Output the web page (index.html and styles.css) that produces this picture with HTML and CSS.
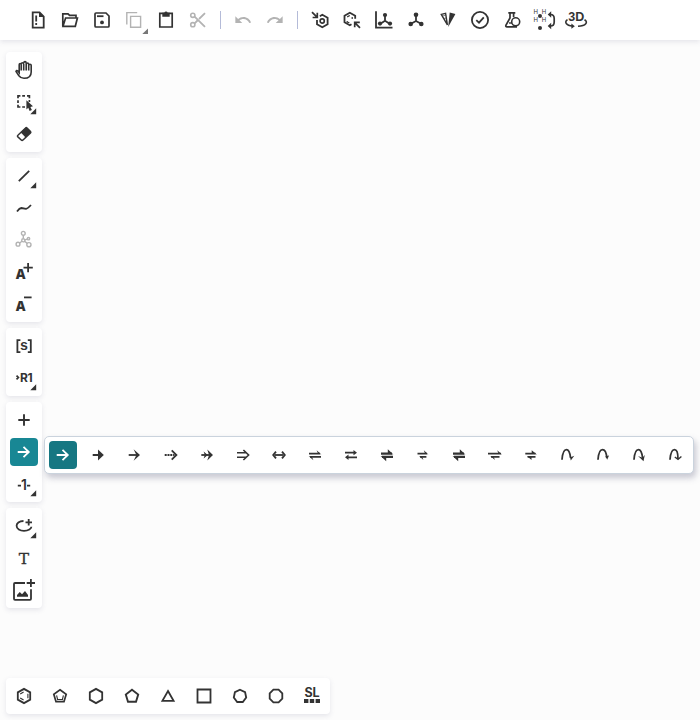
FILE: index.html
```
<!DOCTYPE html>
<html lang="en">
<head>
<meta charset="utf-8">
<title>Structure editor</title>
<link rel="stylesheet" href="styles.css">
</head>
<body>
<header class="topbar">
  <svg class="icon" viewBox="-16 -16 32 32"><path d="M-5.3-7.6H1.6L5.7-3.5V7.6H-5.3Z"/><path class="fill" d="M1-8L6-3H1Z"/><path d="M-1.8-4.6V1.6M-1.8 3V4.9" stroke-width="1.8"/></svg>
  <svg class="icon" viewBox="-16 -16 32 32"><path d="M-7.2 6V-6.2H-2L-.4-4.6H6V-2M-7 6.3L-4.4-2H7.4L5.3 6.3Z" stroke-width="1.7"/></svg>
  <svg class="icon" viewBox="-16 -16 32 32"><path d="M-6-7H4L7-4V6Q7 7 6 7H-6Q-7 7-7 6V-6Q-7-7-6-7Z" stroke-width="1.7"/><path d="M-5-3.8H1.5" stroke-width="1.8"/><circle class="fill" cx="0" cy="2.4" r="1.9"/></svg>
  <svg class="icon muted" viewBox="-16 -16 32 32"><path d="M-7.2 4.5V-7.4H3.2M-3.4-3.6H6.6V7.3H-3.4Z" stroke-width="1.4"/><path class="corner" d="M14 8.5V14H8.3Z"/></svg>
  <svg class="icon" viewBox="-16 -16 32 32"><path d="M-6.2-6.6H6.2V7H-6.2Z" stroke-width="1.7"/><path class="fill" d="M-3.7-7.3H-1.7A1.8 1.8 0 0 1 1.7-7.3H3.7V-3.2H-3.7Z"/></svg>
  <svg class="icon muted" viewBox="-16 -16 32 32"><circle cx="-5.2" cy="-4.7" r="2.1" stroke-width="1.6"/><circle cx="-5.2" cy="4.7" r="2.1" stroke-width="1.6"/><path d="M-3.4-3.4L7 6.8M-3.4 3.4L-.5.5M1-1L7-6.8"/></svg>
  <i class="divider"></i>
  <svg class="icon muted" viewBox="-16 -16 32 32"><path class="fill" transform="translate(-9.2 -9.2) scale(.77)" d="M12.5 8c-2.65 0-5.05.99-6.9 2.6L2 7v9h9l-3.62-3.62c1.39-1.16 3.16-1.88 5.12-1.88 3.54 0 6.55 2.31 7.6 5.5l2.37-.78C21.08 11.03 17.15 8 12.5 8z"/></svg>
  <svg class="icon muted" viewBox="-16 -16 32 32"><path class="fill" transform="translate(9.2 -9.2) scale(-.77 .77)" d="M12.5 8c-2.65 0-5.05.99-6.9 2.6L2 7v9h9l-3.62-3.62c1.39-1.16 3.16-1.88 5.12-1.88 3.54 0 6.55 2.31 7.6 5.5l2.37-.78C21.08 11.03 17.15 8 12.5 8z"/></svg>
  <i class="divider"></i>
  <svg class="icon" viewBox="-16 -16 32 32"><path d="M-8-7.8L-3-2.8M-2.7-7.2V-2.5H-7.4" stroke-width="1.7"/><path d="M-3 0V4.2L2.3 7.2L7.6 4.2V-2.2L2.3-5.2L-.2-3.8"/><circle cx="2.2" cy="1" r="2.1" stroke-width="1.7"/></svg>
  <svg class="icon" viewBox="-16 -16 32 32"><path d="M3.2-1.2V-4.2L-2.2-7.2L-7.5-4.2V2.2L-2.2 5.2L-.5 4.2"/><path d="M-4.8-3.1L-2.2-4.5M.2-3.1V-1M-4.8 1V2L-2.6 2.7" stroke-width="1.2"/><path d="M8 7.8L3 2.8M2.7 7.2V2.3H7.8" stroke-width="1.7"/></svg>
  <svg class="icon" viewBox="-16 -16 32 32"><path d="M-8-8.7V7.7H8.5"/><path d="M1-5V.8L-4 4M1 .8L6 4"/><g class="fill"><circle cx="1" cy="-5" r="2.1"/><circle cx="-4" cy="3.6" r="2.1"/><circle cx="6" cy="3.6" r="2.1"/></g></svg>
  <svg class="icon" viewBox="-16 -16 32 32"><path d="M0-5V1L-5.5 4M0 1L5.5 4"/><g class="fill"><circle cx="0" cy="-5.2" r="2.3"/><circle cx="-5.3" cy="4" r="2.3"/><circle cx="5.3" cy="4" r="2.3"/></g></svg>
  <svg class="icon" viewBox="-16 -16 32 32"><path d="M-6.7-5.6L-2.4-6.6L-.6 4.8Z" stroke-width="1.4"/><path d="M-5.5-4L-2.4-4.8M-4.2-1.5L-2-2" stroke-width=".6"/><path class="fill" d="M1.7-7.4L7.4-6L.2 7Z"/></svg>
  <svg class="icon" viewBox="-16 -16 32 32"><circle cx="0" cy="0" r="8.1" stroke-width="1.8"/><path d="M-3.7.1L-1 2.6L3.8-2.7"/></svg>
  <svg class="icon" viewBox="-16 -16 32 32"><path d="M-3.7-7.2H3.3M-2-7V-2L-6 5Q-6.7 6.9-5 6.9H5M1.6-7V-3" stroke-width="1.7"/><circle cx="3.7" cy="1.8" r="4" stroke-width="1.6"/><path d="M-3 3H0" stroke-width="1.4"/></svg>
  <svg class="icon" viewBox="-16 -16 32 32"><g class="atoms"><text x="-10.6" y="-6">H</text><text x="-2.3" y="-6">H</text><text x="-10.6" y="2.2">H</text><text x="-2.3" y="2.2">H</text></g><g class="fill"><circle cx="-4" cy="-4" r="2"/><circle cx="-4" cy="8" r="2"/><path d="M3.7-5.5L7.2-8.8V-2.2ZM3.7 6L7.2 2.7V9.3Z"/></g><path d="M6.5-5.5Q10.2-5.5 10.2-1.5V2Q10.2 6 6.5 6" stroke-width="1.7"/></svg>
  <svg class="icon" viewBox="-16 -16 32 32"><text class="three" x="-7.8" y="1">3D</text><path d="M-8.5-.3C-12 2-10 5.3-3.5 6M8.5-.3C12.5 2 10 5.8 2 6.3" stroke-width="1.6"/><path class="fill" d="M-4.6 3.4L-1.2 6.3L-4.6 8.8Z"/></svg>
</header>
<main class="canvas">
  <nav class="rail">
    <section class="panel">
      <svg class="icon" viewBox="-16 -16 32 32"><path d="M-2.8.5V-5.2Q-2.8-6.5-3.8-6.5T-4.8-5.2V2.7L-6.3.8Q-7.5 0-8 1.4L-5.1 5.8Q-3.3 8.3 0 8.3Q7.2 8.3 7.2 2V-4.4Q7.2-5.7 6-5.7T4.7-4.4V.5M-2.8-6Q-2.6-7.3-1.5-7.3T-.3-6V.5M-.3-7Q-.1-8.4 1-8.4T2.2-7V.5M2.2-5.8Q2.4-7 3.5-7T4.7-5.8V-3" stroke-width="1.6"/></svg>
      <svg class="icon" viewBox="-16 -16 32 32"><path d="M-6-3.8V-6.2H-3.6M-1.8-6.2H1M3-6.2H5.4V-3.8M-6-1.8V1M-6 2.8V5H-3.6M-1.8 5H1M5.4-2V0" stroke-width="1.7"/><path class="fill" d="M2.4-1.8L9 4.2L6.4 4.9L7.9 7.9L5.6 8.9L4.3 5.8L2.4 7.4Z"/><path class="corner" d="M12.2 6.3V12.2H6.3Z"/></svg>
      <svg class="icon" viewBox="-16 -16 32 32"><path class="fill" d="M2.2-7L7-2.2L1.6 3.4L-3.2-1.4Z"/><path d="M1.6-6Q2.3-6.7 3-6L6.5-2.5Q7.2-1.8 6.5-1.1L-1 6Q-1.9 6.8-2.8 6L-6.1 2.9Q-7 2-6.1 1.2Z" stroke-width="1.5"/></svg>
    </section>
    <section class="panel">
      <svg class="icon" viewBox="-16 -16 32 32"><path d="M-5.2 5.2L5.2-5.2" stroke-width="1.8"/><path class="corner" d="M12.2 6.3V12.2H6.3Z"/></svg>
      <svg class="icon" viewBox="-16 -16 32 32"><path d="M-7 3.5Q-4.5.2-2.6 0L2 .9Q3.5.7 7-3" stroke-width="1.8"/></svg>
      <svg class="icon muted" viewBox="-16 -16 32 32"><g stroke-width="1.4"><circle cx="-.7" cy="-6.7" r="1.9"/><circle cx="-.7" cy=".3" r="1.6"/><circle cx="-6" cy="4.2" r="1.9"/><circle cx="4.9" cy="4.7" r="2.1"/><circle cx="4.5" cy="-1.3" r="1.2"/><path d="M-.7-4.8V-1.4M-2 1.3L-4.4 3M.6 1.3L3.2 3.4M.9-.1L3.3-.9"/></g></svg>
      <svg class="icon" viewBox="-16 -16 32 32"><text class="letter" x="-8.3" y="7.3">A</text><path d="M-.5-4.3H8.8M4.1-9V.3"/></svg>
      <svg class="icon" viewBox="-16 -16 32 32"><text class="letter" x="-8.3" y="7.3">A</text><path d="M0-6.6H7.6"/></svg>
    </section>
    <section class="panel">
      <svg class="icon" viewBox="-16 -16 32 32"><path d="M-3.6-5.8H-6.6V6.1H-3.6M3.8-5.8H6.8V6.1H3.8"/><text class="sgroup" x="0" y="4">s</text></svg>
      <svg class="icon" viewBox="-16 -16 32 32"><path d="M-7.5-2.4L-5.6-.5L-7.5 1.4" stroke-width="1.7"/><text class="rgroup" x="-4" y="4">R1</text><path class="corner" d="M12.2 6.3V12.2H6.3Z"/></svg>
    </section>
    <section class="panel">
      <svg class="icon" viewBox="-16 -16 32 32"><path d="M-5.7 0H5.7M0-5.7V5.7" stroke-width="1.9"/></svg>
      <svg class="icon active" viewBox="-16 -16 32 32"><path d="M-6.3 0H4.6M-.5-5.2L4.8 0L-.5 5.2" stroke-width="1.8"/></svg>
      <svg class="icon" viewBox="-16 -16 32 32"><path d="M-6.2 1.6H-3M3 1.6H6.2"/><text class="mapping" x="0" y="5.6">1</text><path class="corner" d="M12.2 6.3V12.2H6.3Z"/></svg>
    </section>
    <section class="panel">
      <svg class="icon" viewBox="-16 -16 32 32"><path d="M-.5-5C-5-5-7.4-2.6-7.4-.3C-7.4 3-4 4.8 0 4.8C4.5 4.8 7.4 2.5 7.4.8"/><path d="M1.5-3.7H8M4.7-7V-.5" stroke-width="1.8"/><path class="corner" d="M12.2 6.3V12.2H6.3Z"/></svg>
      <svg class="icon" viewBox="-16 -16 32 32"><text class="serif" x="0" y="6">T</text></svg>
      <svg class="icon" viewBox="-16 -16 32 32"><path d="M1-7H-9Q-10-7-10-6V8.8Q-10 9.8-9 9.8H6Q7 9.8 7 8.8V-.8M2.7-7H11M6.9-11V-2.9"/><path class="fill" d="M-7 6.7V5L-4.2 2L-2 4.2L1 1L4 5V6.7Z"/></svg>
    </section>
  </nav>
  <div class="flyout">
    <svg class="icon active" viewBox="-16 -16 32 32"><path d="M-6.3 0H4.6M-.5-5.2L4.8 0L-.5 5.2" stroke-width="1.8"/></svg>
    <svg class="icon" viewBox="-16 -16 32 32"><path d="M-6.3 0H0" stroke-width="2"/><path class="fill" d="M-1-5.6L4.8 0L-1 5.6Z"/></svg>
    <svg class="icon" viewBox="-16 -16 32 32"><path d="M-6.3 0H3"/><path class="fill" d="M-1.4-5.7L5 0L-1.4 5.7L1.4 0Z"/></svg>
    <svg class="icon" viewBox="-16 -16 32 32"><path d="M-6.3 0H3.5" stroke-dasharray="2 .8"/><path d="M.7-4.6L5.4 0L.7 4.6" stroke-width="1.8"/></svg>
    <svg class="icon" viewBox="-16 -16 32 32"><path d="M-5.7 0H4"/><path class="fill" d="M.3-5.6L6 0L.3 5.6L2 0ZM-3.4-3.4L.8 0L-3.4 3.4L-2.2 0Z"/></svg>
    <svg class="icon" viewBox="-16 -16 32 32"><path d="M-6-2.3H3.3M-6 2.3H3.3M.4-5L5.6 0L.4 5" stroke-width="1.6"/></svg>
    <svg class="icon" viewBox="-16 -16 32 32"><path d="M-4.5 0H4.5"/><path d="M-3-3.4L-5.8 0L-3 3.4M3-3.4L5.8 0L3 3.4" stroke-width="1.8"/></svg>
    <svg class="icon" viewBox="-16 -16 32 32"><path d="M-6-1.4H5M-5 1.9H6"/><path class="fill" d="M6.4-.5L1.6-4.8L3-1.4ZM-6.4 1L-1.6 5.3L-3 1.9Z"/></svg>
    <svg class="icon" viewBox="-16 -16 32 32"><path d="M-6-2.3H4M-4 2.3H6"/><path class="fill" d="M6-2.3L2.5-5V.3ZM-6 2.3L-2.5-.4V5Z"/></svg>
    <svg class="icon" viewBox="-16 -16 32 32"><path d="M-6-1.4H5M-5 1.9H6" stroke-width="2.1"/><path class="fill" d="M6.4-.4L.8-5.8V-1.4ZM-6.4.9L-.8 6.2V1.9Z"/></svg>
    <svg class="icon" viewBox="-16 -16 32 32"><path d="M-5.5-1.4H4M-3 1.8H3.4"/><path class="fill" d="M5.4-.5L.8-4.8L2-1.4ZM-3.9.9L.4 5.1L-.8 1.8Z"/></svg>
    <svg class="icon" viewBox="-16 -16 32 32"><path d="M-6-1.4H5M-5 1.9H6" stroke-width="2.1"/><path class="fill" d="M6.4-.4L.8-5.8V-1.4ZM-6.4.9L-.8 6.2V1.9Z"/></svg>
    <svg class="icon" viewBox="-16 -16 32 32"><path d="M-7-1.4H6M-4 1.8H4.5"/><path class="fill" d="M7-.5L2.2-4.8L3.5-1.4ZM-4.8.9L0 5.1L-1.4 1.8Z"/></svg>
    <svg class="icon" viewBox="-16 -16 32 32"><path d="M-5.7-1.4H4.5M-3.4 1.8H4.5"/><path class="fill" d="M5.9-.5L.7-4.8V-1.4ZM-4 .9L.5 5V1.8Z"/></svg>
    <svg class="icon" viewBox="-16 -16 32 32"><path d="M-5 4.7C-4.5-2-3.2-5.3-.5-5.3C2.3-5.3 3-2 3.6 3" stroke-width="1.8"/><path class="fill" d="M2.6.5L4.2 2L7.3.7L3.8 5.4Z"/></svg>
    <svg class="icon" viewBox="-16 -16 32 32"><path d="M-5 4.7C-4.5-2-3.2-5.3-.5-5.3C2.3-5.3 3.4-2 3.8 3" stroke-width="1.8"/><path class="fill" d="M2.4 1.2L6 .6L4.2 4.8Z"/></svg>
    <svg class="icon" viewBox="-16 -16 32 32"><path d="M-5 4.7C-4.5-2-3.2-5.3-.5-5.3C2.3-5.3 3-2 3.6 3" stroke-width="1.8"/><path class="fill" d="M-1 1L3.4 2.8L5.8 0L4.5 6.2Z"/></svg>
    <svg class="icon" viewBox="-16 -16 32 32"><path d="M-5 4.7C-4.5-2-3.2-5.3-.5-5.3C2.3-5.3 3-2 3 4" stroke-width="1.8"/><path d="M-.2 2L3 4.4L6.4 1.4" stroke-width="1.4"/></svg>
  </div>
  <footer class="templates">
    <svg class="icon" viewBox="-16 -16 32 32"><path d="M0-7.1L6.2-3.6V3.6L0 7.1L-6.2 3.6V-3.6Z"/><path d="M-3.8-2L-.4-4M3.9-2.2V2.2M-3.8 2L-.4 4" stroke-width="1.1"/></svg>
    <svg class="icon" viewBox="-16 -16 32 32"><path d="M0-6.2L6.2-1.7L4 5.7H-4L-6.2-1.7Z" stroke-width="1.7"/><path d="M-3.4-.6L-2.3 4M3.4-.6L2.3 4M-2 3.5H2" stroke-width="1.1"/></svg>
    <svg class="icon" viewBox="-16 -16 32 32"><path d="M0-7.1L6.2-3.6V3.6L0 7.1L-6.2 3.6V-3.6Z"/></svg>
    <svg class="icon" viewBox="-16 -16 32 32"><path d="M0-6.2L6.2-1.5L4 5.8H-4L-6.2-1.5Z" stroke-width="1.9"/></svg>
    <svg class="icon" viewBox="-16 -16 32 32"><path d="M0-5L5.6 4.8H-5.6Z"/></svg>
    <svg class="icon" viewBox="-16 -16 32 32"><path d="M-6.5-6.5H6.5V6.5H-6.5Z"/></svg>
    <svg class="icon" viewBox="-16 -16 32 32"><path d="M0-6.3L5.1-3.8L6.2 1.6L2.8 6H-2.8L-6.2 1.6L-5.1-3.8Z"/></svg>
    <svg class="icon" viewBox="-16 -16 32 32"><path d="M-2.6-6.3H2.6L6.3-2.6V2.6L2.6 6.3H-2.6L-6.3 2.6V-2.6Z"/></svg>
    <svg class="icon" viewBox="-16 -16 32 32"><text class="library" x="0" y="1">SL</text><path class="fill" d="M-8 3H-3.6V7H-8ZM-2.2 3H2.2V7H-2.2ZM3.6 3H8V7H3.6Z"/></svg>
  </footer>
</main>
</body>
</html>
```
FILE: styles.css
```
* { box-sizing: border-box; }
body {
  margin: 0;
  height: 720px;
  display: flex;
  flex-direction: column;
  background: #fcfcfc;
  overflow: hidden;
  font-family: Inter, "Liberation Sans", sans-serif;
}
.topbar {
  height: 40px;
  flex: none;
  display: flex;
  align-items: center;
  padding-left: 22px;
  background: #fff;
  box-shadow: 0 2px 5px rgba(103, 104, 132, .15);
}
.icon {
  width: 32px;
  height: 32px;
  flex: none;
  overflow: visible;
  color: #333;
  fill: none;
  stroke: currentColor;
  stroke-width: 1.8;
}
.icon .fill, .icon .corner, .icon text { fill: currentColor; stroke: none; }
.icon.muted { color: #b3b3b3; }
.muted .corner { fill: #777; }
.divider {
  width: 1px;
  height: 18px;
  margin: 0 6px;
  background: #b4bbd8;
}
.canvas {
  position: relative;
  flex: 1;
  display: flex;
  flex-direction: column;
  justify-content: space-between;
  align-items: flex-start;
  padding: 12px 6px 6px;
}
.rail { display: flex; flex-direction: column; gap: 6px; }
.panel, .templates {
  background: #fff;
  border-radius: 4px;
  box-shadow: 0 2px 5px rgba(103, 104, 132, .15);
}
.panel {
  width: 36px;
  padding: 2px 0;
  display: flex;
  flex-direction: column;
  align-items: center;
}
.panel .active {
  width: 28px;
  height: 28px;
  margin: 2px 0;
  background: #188794;
}
.icon.active { color: #fff; border-radius: 4px; }
.flyout {
  position: absolute;
  left: 44px;
  top: 396px;
  width: 650px;
  height: 38px;
  display: flex;
  align-items: center;
  background: #fff;
  border: 1px solid #cad3dd;
  border-radius: 5px;
  box-shadow: 2px 4px 6px rgba(103, 104, 132, .35);
}
.flyout .icon { margin: 0 2px; }
.flyout .active { width: 28px; height: 28px; margin: 0 4px; background: #167782; }
.active path { transform: scale(1.14); }
.templates {
  height: 36px;
  display: flex;
  align-items: center;
}
.templates .icon { margin: 0 2px; }
.atoms { font-size: 6px; opacity: .99; }
.three { font: bold 12.5px "Liberation Sans", sans-serif; }
.letter { font: 800 13.5px "Open Sans", sans-serif; }
.sgroup { font: bold 14px "Liberation Mono", monospace; text-anchor: middle; }
.rgroup { font: bold 12px Inter, sans-serif; letter-spacing: -.5px; }
.mapping { font: 600 14px Inter, sans-serif; text-anchor: middle; }
.icon .serif {
  font: 15.5px "DejaVu Serif", serif;
  text-anchor: middle;
  stroke: currentColor;
  stroke-width: .3;
}
.library { font: bold 12.5px Inter, sans-serif; text-anchor: middle; }
```
